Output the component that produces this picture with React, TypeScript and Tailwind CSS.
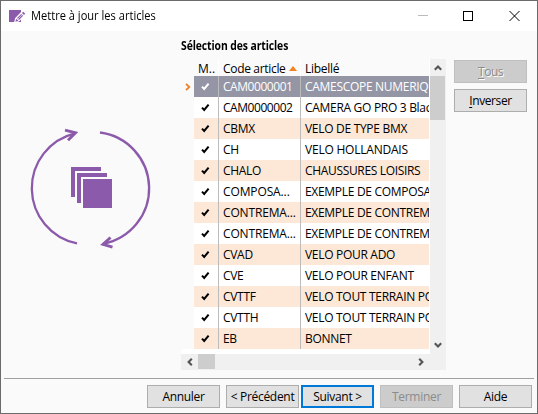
import React from "react";

type Article = { code: string; label: string; codeCls?: string; labelCls?: string };

const articles: Article[] = [
  { code: "CAM0000001", label: "CAMESCOPE NUMERIQUE", codeCls: "tracking-[-0.45px]" },
  { code: "CAM0000002", label: "CAMERA GO PRO 3 Black", codeCls: "tracking-[-0.45px]" },
  { code: "CBMX", label: "VELO DE TYPE BMX", labelCls: "tracking-[-0.3px]" },
  { code: "CH", label: "VELO HOLLANDAIS", labelCls: "tracking-[-0.22px]" },
  { code: "CHALO", label: "CHAUSSURES LOISIRS", labelCls: "tracking-[-0.33px]" },
  { code: "COMPOSA...", label: "EXEMPLE DE COMPOSANT", codeCls: "tracking-[-0.12px]" },
  { code: "CONTREMA...", label: "EXEMPLE DE CONTREMARQUE", codeCls: "tracking-[-0.15px]" },
  { code: "CONTREMA...", label: "EXEMPLE DE CONTREMARQUE", codeCls: "tracking-[-0.15px]" },
  { code: "CVAD", label: "VELO POUR ADO" },
  { code: "CVE", label: "VELO POUR ENFANT" },
  { code: "CVTTF", label: "VELO TOUT TERRAIN POUR" },
  { code: "CVTTH", label: "VELO TOUT TERRAIN POUR" },
  { code: "EB", label: "BONNET" },
];

function Check({ color }: { color: string }) {
  return (
    <svg className="ml-[7px] h-[9px] w-[9px]" viewBox="0 0 9 9">
      <path d="M1 4.6 L3.2 7 L7.6 1.6" fill="none" stroke={color} strokeWidth="2" />
    </svg>
  );
}

function Chevron({ turn }: { turn: string }) {
  return (
    <svg className={`h-[8px] w-[8px] ${turn}`} viewBox="0 0 8 8">
      <path d="M0.8 5.8 L4 2.6 L7.2 5.8" fill="none" stroke="#555" strokeWidth="2.1" />
    </svg>
  );
}

function Button({ children, kind = "normal" }: { children: React.ReactNode; kind?: "normal" | "primary" | "disabled" }) {
  const look =
    kind === "primary"
      ? "border-2 border-[#0078d7] bg-[#e1e1e1] text-black"
      : kind === "disabled"
        ? "border border-[#bfbfbf] bg-[#cccccc] text-[#8b8b8b]"
        : "border border-[#adadad] bg-[#e1e1e1] text-black";
  return (
    <button className={`flex h-[23px] w-[73px] shrink-0 items-center justify-center whitespace-nowrap ${look}`}>
      {children}
    </button>
  );
}

function TitleBar() {
  return (
    <header className="flex h-[30px] shrink-0 items-center bg-white">
      <svg className="ml-[8px] h-[13px] w-[17px] shrink-0" viewBox="0 0 17 13">
        <path d="M0 0 H12 V12 H0 Z" fill="#8b5aab" />
        <path d="M5 12.5 L6.2 8 L12.8 1.2 L16.8 4.6 L10 11.5 Z" fill="#fff" />
        <path d="M6.3 11.7 L7.3 8.7 L9.4 10.8 Z M8 8 L12.2 3.9 L14.1 5.8 L10 10 Z M13 3.1 L14.2 1.8 L16.2 3.7 L15 5 Z" fill="#8b5aab" />
        <path d="M8.5 9.4 L12.8 5" stroke="#fff" strokeWidth=".7" />
      </svg>
      <h1 className="ml-[5px] origin-left scale-x-[0.925] text-[12px] leading-4">Mettre à jour les articles</h1>
      <svg className="ml-auto mr-[16px] h-[12px] w-[103px] shrink-0" viewBox="0 0 103 12" shapeRendering="crispEdges">
        <path d="M0 5.5 H10" stroke="#bbb" />
        <rect x="45.5" y="1.5" width="9" height="9" fill="none" stroke="#000" />
        <path d="M91.5 1 L101.5 11 M101.5 1 L91.5 11" stroke="#000" shapeRendering="auto" />
      </svg>
    </header>
  );
}

function Illustration() {
  return (
    <svg className="ml-[19px] mt-[79px] h-[150px] w-[150px] shrink-0" viewBox="0 0 150 150" fill="none" stroke="#8b5aab">
      <path d="M57 133.4 A56.4 56.4 0 0 1 55 23.3 M80 22.5 A56.35 56.35 0 0 1 83 133.8" strokeWidth="2.3" />
      <path d="M45 20.2 L55.5 22.8 L48 30.3 M90.5 127.5 L83 134.4 L92.5 137.2" strokeWidth="2.9" />
      <path d="M51 57 H81 V61 H55 V87 H51 Z M57 63 H87 V67 H61 V93 H57 Z M63 69 H92 V98 H63 Z" fill="#8b5aab" stroke="none" shapeRendering="crispEdges" />
    </svg>
  );
}

function ArticleTable() {
  return (
    <div className="mt-[5px] w-[265px]">
      <div className="flex h-[295px] bg-white">
        <div className="w-[13px] shrink-0">
          <div className="flex h-[290px] justify-center bg-[#fafafa]">
            <svg className="mt-[24px] h-[8px] w-[6px]" viewBox="0 0 6 8">
              <path d="M1 .8 L4.3 4 L1 7.2" fill="none" stroke="#f08028" strokeWidth="1.8" />
            </svg>
          </div>
        </div>
        <div className="w-[235px] overflow-hidden">
          <div className="flex h-[17px] whitespace-nowrap bg-[#fafafa] leading-[20px]">
            <div className="w-[25px] shrink-0 border-r border-white pl-[4px]">M..</div>
            <div className="flex w-[82px] shrink-0 items-center border-r border-white pl-[4px]">
              <span className="h-[17px] w-[63px] tracking-[-0.32px]">Code article</span>
              <svg className="ml-[3px] mt-px h-[5px] w-[8px] shrink-0" viewBox="0 0 8 5">
                <path d="M4 0 L8 5 H0 Z" fill="#f58220" />
              </svg>
            </div>
            <div className="pl-[4px] tracking-[-0.3px]">Libellé</div>
          </div>
          {articles.map((a, i) => (
            <div
              key={i}
              className={`flex h-[21px] whitespace-nowrap leading-[21px] tracking-[-0.3px] ${
                i === 0 ? "bg-[#9495a5] text-white" : i % 2 === 0 ? "bg-[#fde8d8]" : "bg-white"
              }`}
            >
              <div className="flex w-[25px] shrink-0 items-center border-r border-[#bcbcbc]">
                <Check color={i === 0 ? "#fff" : "#000"} />
              </div>
              <div className={`w-[82px] shrink-0 border-r border-[#bcbcbc] pl-[4px] ${a.codeCls ?? ""}`}>{a.code}</div>
              <div className={`pl-[4px] ${a.labelCls ?? ""}`}>{a.label}</div>
            </div>
          ))}
        </div>
        <div className="ml-px flex w-[16px] shrink-0 flex-col items-center bg-[#f0f0f0]">
          <div className="flex h-[17px] items-center">
            <Chevron turn="rotate-0" />
          </div>
          <div className="h-[44px] w-[15px] self-start bg-[#cdcdcd]" />
          <div className="mt-auto flex h-[13px] items-start">
            <Chevron turn="rotate-180" />
          </div>
        </div>
      </div>
      <div className="flex h-[16px] items-center bg-[#f0f0f0]">
        <div className="flex w-[17px] justify-center">
          <Chevron turn="-rotate-90" />
        </div>
        <div className="h-[15px] w-[17px] self-start bg-[#cdcdcd]" />
        <div className="ml-auto mr-[21px]">
          <Chevron turn="rotate-90" />
        </div>
      </div>
    </div>
  );
}

export default function App() {
  return (
    <main className="flex h-[414px] w-[538px] flex-col overflow-hidden border border-[#6b6b6b] bg-[#fafafa] font-['Open_Sans','Noto_Sans',sans-serif] text-[12px] text-black">
      <TitleBar />
      <div className="flex h-[347px] shrink-0">
        <Illustration />
        <section className="ml-[11px] pt-[7px]">
          <h2 className="h-[16px] w-max origin-left scale-x-[0.865] text-[12px] font-bold leading-[16px] tracking-[-0.1px]">
            Sélection des articles
          </h2>
          <ArticleTable />
        </section>
        <aside className="ml-[8px] flex flex-col gap-[6px] pt-[29px]">
          <Button kind="disabled">
            <span className="tracking-[-0.5px] [text-shadow:1px_1px_0_#fff]">
              <u className="underline-offset-2">T</u>ous
            </span>
          </Button>
          <Button>
            <span className="tracking-[-0.4px]">
              <u className="underline-offset-2">I</u>nverser
            </span>
          </Button>
        </aside>
      </div>
      <footer className="ml-[3px] mr-[3px] flex h-[35px] shrink-0 border-t border-[#a0a0a0] pl-[143px] pt-[6px] tracking-[-0.3px]">
        <Button>Annuler</Button>
        <div className="ml-[6px] flex gap-[2px]">
          <Button>&lt; Précédent</Button>
          <Button kind="primary">Suivant &gt;</Button>
        </div>
        <div className="ml-[6px] flex gap-[6px]">
          <Button kind="disabled">Terminer</Button>
          <Button>Aide</Button>
        </div>
      </footer>
    </main>
  );
}
